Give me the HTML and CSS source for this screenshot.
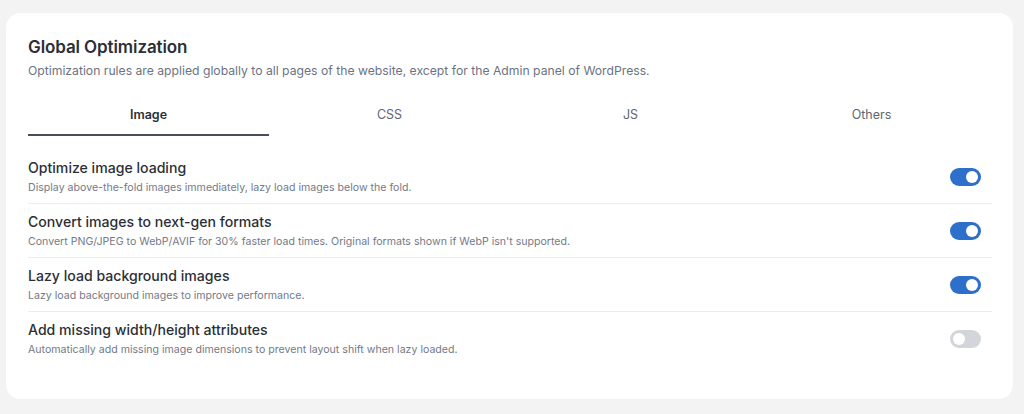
FILE: index.html
```html
<!DOCTYPE html>
<html lang="en">
<head>
<meta charset="utf-8">
<title>Global Optimization</title>
<link rel="stylesheet" href="styles.css">
</head>
<body>
<div class="page">
  <section class="card">
    <header class="card-head">
      <h1 class="title">Global Optimization</h1>
      <p class="subtitle">Optimization rules are applied globally to all pages of the website, except for the Admin panel of WordPress.</p>
    </header>
    <nav class="tabs">
      <div class="tab active">Image</div>
      <div class="tab">CSS</div>
      <div class="tab">JS</div>
      <div class="tab">Others</div>
    </nav>
    <div class="rows">
      <div class="row">
        <div class="row-text">
          <div class="row-title">Optimize image loading</div>
          <div class="row-desc">Display above-the-fold images immediately, lazy load images below the fold.</div>
        </div>
        <span class="toggle on"><span class="knob"></span></span>
      </div>
      <div class="row">
        <div class="row-text">
          <div class="row-title">Convert images to next-gen formats</div>
          <div class="row-desc">Convert PNG/JPEG to WebP/AVIF for 30% faster load times. Original formats shown if WebP isn't supported.</div>
        </div>
        <span class="toggle on"><span class="knob"></span></span>
      </div>
      <div class="row">
        <div class="row-text">
          <div class="row-title">Lazy load background images</div>
          <div class="row-desc">Lazy load background images to improve performance.</div>
        </div>
        <span class="toggle on"><span class="knob"></span></span>
      </div>
      <div class="row last">
        <div class="row-text">
          <div class="row-title">Add missing width/height attributes</div>
          <div class="row-desc">Automatically add missing image dimensions to prevent layout shift when lazy loaded.</div>
        </div>
        <span class="toggle"><span class="knob"></span></span>
      </div>
    </div>
  </section>
</div>
</body>
</html>
```
FILE: styles.css
```css
* { box-sizing: border-box; }
html, body { margin: 0; padding: 0; }
body {
  background: #f3f3f3;
  font-family: Inter, "Noto Sans", "Liberation Sans", sans-serif;
  color: #2b2f36;
  width: 1024px;
  height: 414px;
  overflow: hidden;
}
.page {
  padding: 13px 11px 0 6px;
}
.card {
  background: #ffffff;
  border-radius: 14px;
  height: 386px;
  padding: 24px 21px 0 22px;
  box-shadow: 0 0 1px rgba(0,0,0,0.04);
}
.title {
  margin: 0;
  font-size: 17px;
  font-weight: 600;
  line-height: 20px;
  color: #2b2f36;
  letter-spacing: -0.1px;
}
.subtitle {
  margin: 5px 0 0;
  font-size: 12.2px;
  line-height: 17px;
  color: #6b7383;
}
.tabs {
  display: grid;
  grid-template-columns: repeat(4, 1fr);
  margin-top: 21px;
}
.tab {
  text-align: center;
  font-size: 12.5px;
  line-height: 16px;
  padding: 7px 0 11px;
  color: #5f6673;
  border-bottom: 2px solid transparent;
}
.tab.active {
  color: #2b2f36;
  font-weight: 600;
  border-bottom-color: #4a4f57;
}
.rows {
  margin-top: 14px;
}
.row {
  display: flex;
  align-items: center;
  justify-content: space-between;
  padding: 9px 0 8px;
  border-bottom: 1px solid #ececec;
}
.row.last { border-bottom: none; }
.row-title {
  font-size: 14.1px;
  font-weight: 500;
  line-height: 18px;
  color: #2b2f36;
}
.row-desc {
  margin-top: 3px;
  font-size: 10.6px;
  line-height: 15px;
  color: #737a88;
}
.toggle {
  position: relative;
  width: 31px;
  height: 18px;
  border-radius: 9px;
  background: #d2d5da;
  margin-right: 11px;
  flex: none;
}
.toggle .knob {
  position: absolute;
  top: 3px;
  left: 3px;
  width: 12px;
  height: 12px;
  border-radius: 50%;
  background: #ffffff;
}
.toggle.on {
  background: #2f6fcc;
}
.toggle.on .knob {
  left: 16px;
}
```
